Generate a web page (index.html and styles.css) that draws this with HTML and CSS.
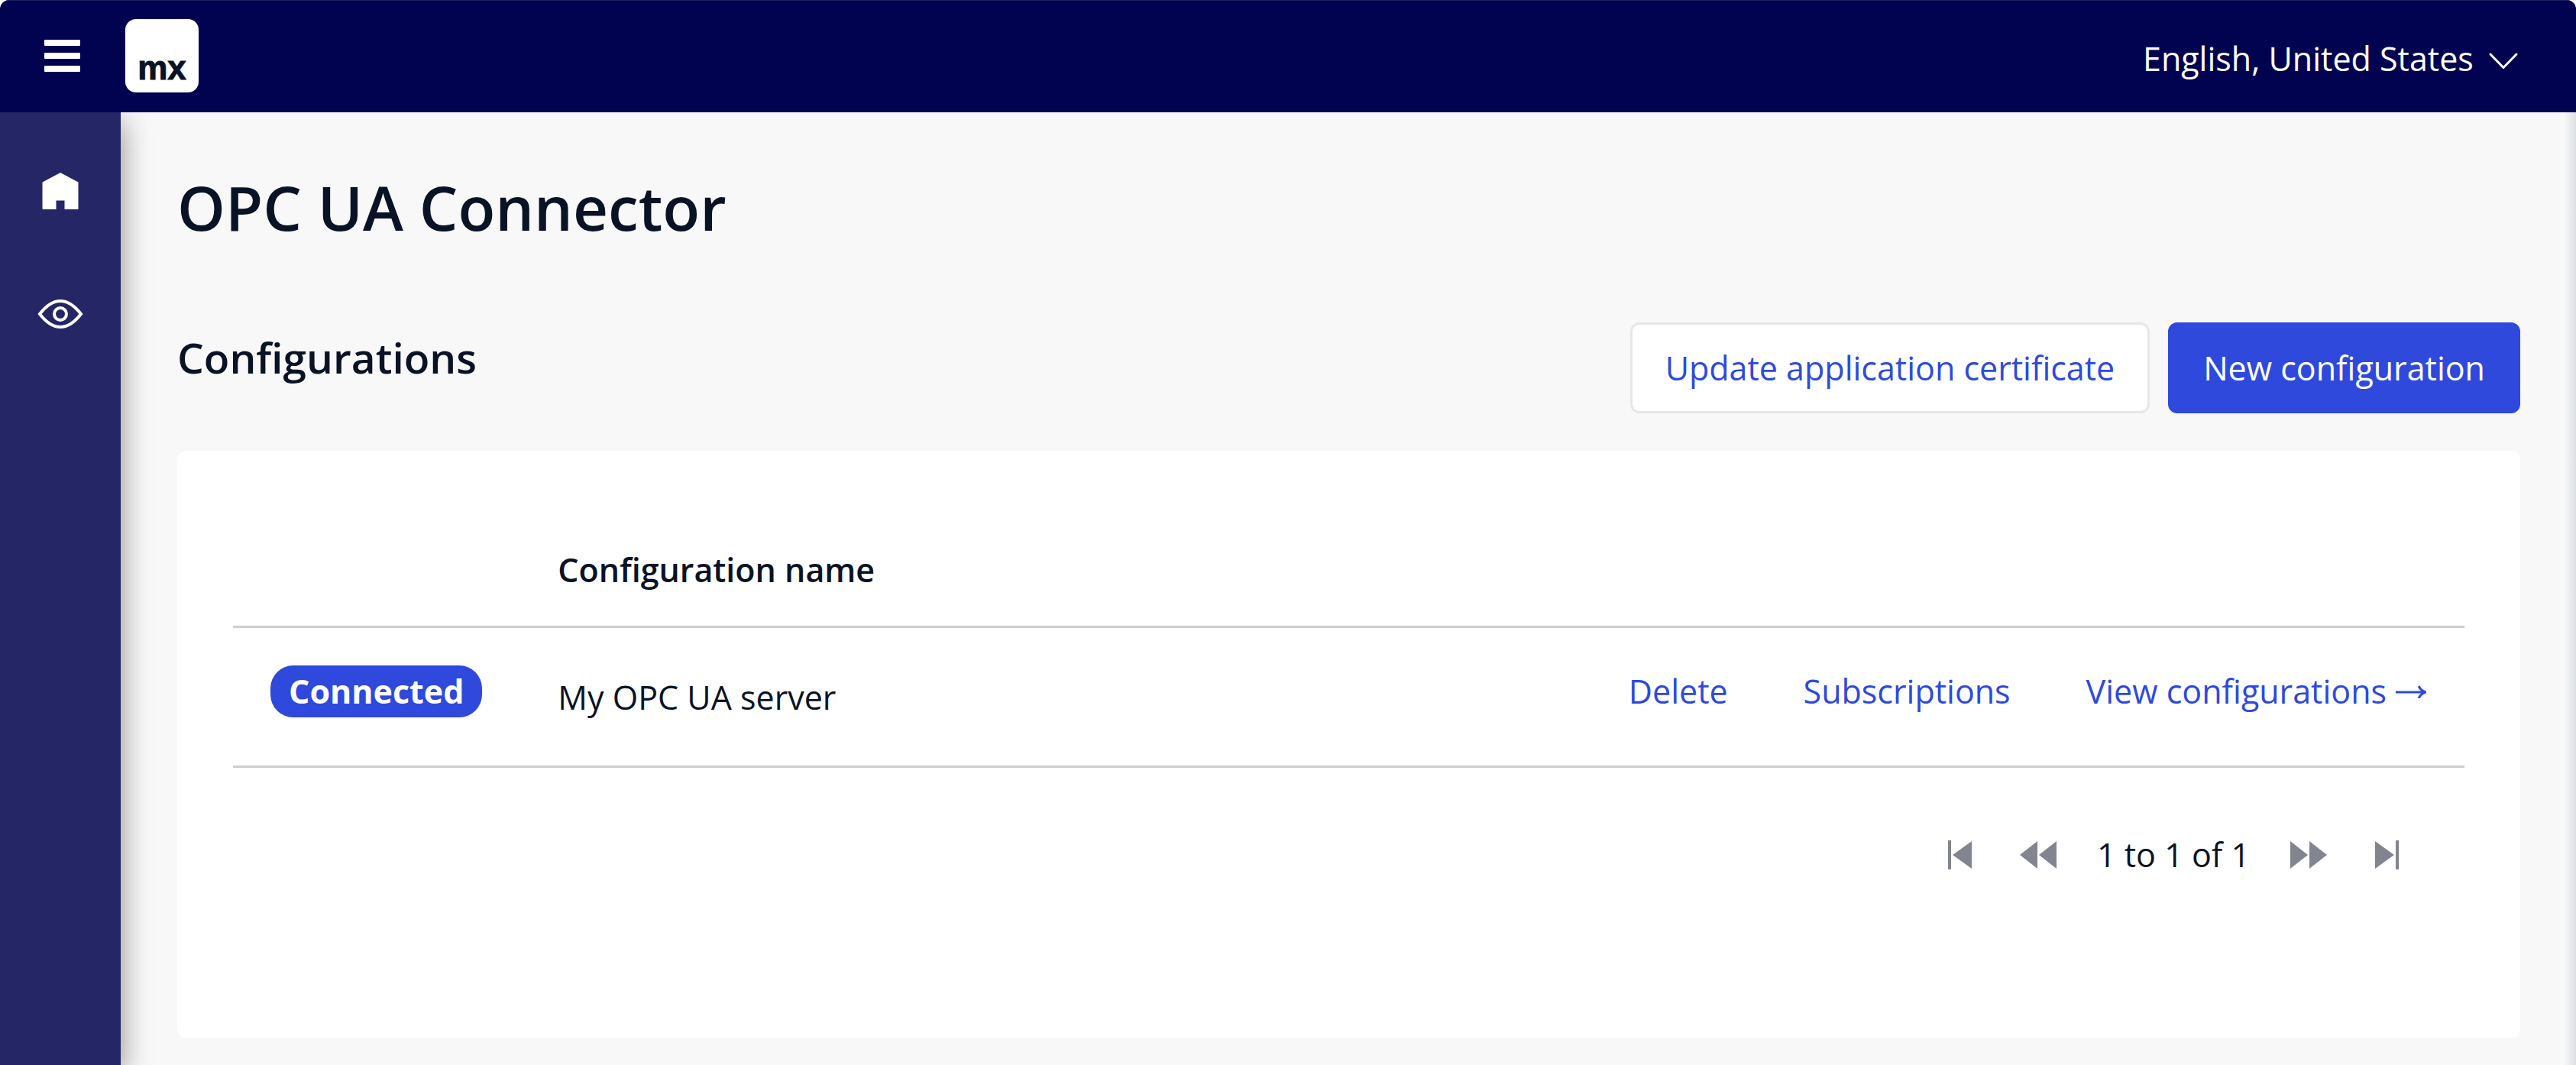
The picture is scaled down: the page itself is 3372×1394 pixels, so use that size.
FILE: index.html
```html
<!DOCTYPE html>
<html lang="en-US">
<head>
<meta charset="utf-8">
<meta name="viewport" content="width=device-width, initial-scale=1">
<title>OPC UA Connector</title>
<link rel="stylesheet" href="styles.css">
</head>
<body>
<div class="app">
  <header class="topbar">
    <button class="menu-toggle" type="button" aria-label="Toggle menu">
      <svg width="48" height="42" viewBox="0 0 48 42" fill="currentColor" aria-hidden="true">
        <rect x="0" width="47" height="8" rx="1"/>
        <rect x="0" y="17" width="47" height="8" rx="1"/>
        <rect x="0" y="34" width="47" height="8" rx="1"/>
      </svg>
    </button>
    <a class="logo" href="#">mx</a>
    <div class="language">
      <select class="language-select" aria-label="Language">
        <option>English, United States</option>
      </select>
      <svg class="language-chevron" width="38" height="22" viewBox="0 0 38 22" fill="none" stroke="currentColor" stroke-width="3" stroke-linecap="round" stroke-linejoin="round" aria-hidden="true">
        <path d="M2 2l17 17.500L36 2"/>
      </svg>
    </div>
  </header>
  <div class="body">
    <nav class="sidebar" aria-label="Main">
      <a class="nav-link" href="#" aria-label="Home">
        <svg width="60" height="48" viewBox="0 0 60 48" fill="currentColor" aria-hidden="true">
          <path d="M30 0L53.500 12.500V47a1 1 0 0 1-1 1H35.500V36.500H24.500V48H7.500a1 1 0 0 1-1-1V12.500z"/>
        </svg>
      </a>
      <a class="nav-link" href="#" aria-label="Monitor">
        <svg width="60" height="40" viewBox="0 0 60 40" fill="none" stroke="currentColor" stroke-width="4" aria-hidden="true">
          <path d="M3 20C10 11 19 3 30 3s20 8 27 17c-7 9-16 17-27 17S10 29 3 20z"/>
          <circle cx="30" cy="20" r="8"/>
        </svg>
      </a>
    </nav>
    <main class="content">
      <h1 class="title">OPC UA Connector</h1>
      <div class="section-head">
        <h2 class="subtitle">Configurations</h2>
        <div class="actions">
          <button class="btn" type="button">Update application certificate</button>
          <button class="btn btn-primary" type="button">New configuration</button>
        </div>
      </div>
      <section class="card">
        <table class="grid">
          <thead>
            <tr><th></th><th class="name" scope="col">Configuration name</th><th></th><th></th><th></th></tr>
          </thead>
          <tbody>
            <tr>
              <td><span class="badge">Connected</span></td>
              <td class="name">My OPC UA server</td>
              <td><a href="#">Delete</a></td>
              <td><a href="#">Subscriptions</a></td>
              <td><a class="arrow-link" href="#">View configurations
                <svg width="40" height="18" viewBox="0 0 40 18" fill="none" stroke="currentColor" stroke-width="3" aria-hidden="true">
                  <path d="M0 10h39"/><path d="M30 2q3 6 9 8q-6 2-9 8"/>
                </svg></a></td>
            </tr>
          </tbody>
        </table>
        <div class="pager">
          <button class="page-btn" type="button" aria-label="First page">
            <svg width="32" height="40" viewBox="0 0 32 40" fill="currentColor" aria-hidden="true"><path d="M0 1h4v38H0zM31 2v36L6 20z"/></svg>
          </button>
          <button class="page-btn" type="button" aria-label="Previous page">
            <svg width="48" height="40" viewBox="0 0 48 40" fill="currentColor" aria-hidden="true"><path d="M23 2v36L0 20zM48 2v36L25 20z"/></svg>
          </button>
          <span class="page-status">1 to 1 of 1</span>
          <button class="page-btn" type="button" aria-label="Next page">
            <svg width="48" height="40" viewBox="0 0 48 40" fill="currentColor" aria-hidden="true"><path d="M0 2v36l23-18zM25 2v36l23-18z"/></svg>
          </button>
          <button class="page-btn" type="button" aria-label="Last page">
            <svg width="32" height="40" viewBox="0 0 32 40" fill="currentColor" aria-hidden="true"><path d="M28 1h4v38h-4zM1 2v36l25-18z"/></svg>
          </button>
        </div>
      </section>
    </main>
  </div>
</div>
</body>
</html>
```
FILE: styles.css
```css
* {
  box-sizing: border-box;
}

body {
  margin: 0;
  background: #fff;
  color: #0a1325;
  font-family: "Open Sans", sans-serif;
  font-size: 43px;
  line-height: 68px;
}

button,
select {
  margin: 0;
  padding: 0;
  border: 0;
  background: none;
  color: inherit;
  font: inherit;
}

svg {
  display: block;
}

a {
  color: #2e49dc;
  text-decoration: none;
}

.app {
  position: relative;
  display: flex;
  flex-direction: column;
  min-height: 100vh;
  border-radius: 12px 12px 0 0;
  overflow: hidden;
}

/* soft shade along the right edge of the window */
.app::after {
  content: "";
  position: absolute;
  inset: 0 0 0 auto;
  width: 16px;
  background: linear-gradient(to right, rgba(40, 60, 90, 0), rgba(40, 60, 90, 0.13));
  pointer-events: none;
}

.topbar {
  position: relative;
  z-index: 2;
  display: flex;
  align-items: center;
  height: 147px;
  padding: 0 76px 2px 58px;
  border-top: 1px solid #1d1f62;
  background: #020350;
  color: #fff;
}

.logo {
  display: flex;
  justify-content: center;
  align-items: flex-end;
  width: 96px;
  height: 96px;
  margin-left: 58px;
  padding-bottom: 8px;
  border-radius: 14px;
  background: #fff;
  color: #0a1325;
  font-family: "Liberation Sans", sans-serif;
  font-size: 44px;
  font-weight: 700;
  line-height: 48px;
  -webkit-text-stroke: 1px #0a1325;
}

.language {
  display: flex;
  align-items: center;
  gap: 20px;
  margin-left: auto;
  padding-top: 8px;
}

.language-select {
  appearance: none;
  height: 68px;
}

.language-chevron {
  margin-top: 6px;
}

.body {
  flex: 1;
  display: flex;
}

.sidebar {
  position: relative;
  z-index: 1;
  flex: none;
  display: flex;
  flex-direction: column;
  width: 158px;
  padding-top: 22px;
  background: #252665;
  box-shadow: 0 12px 36px rgba(0, 0, 0, 0.45);
}

.nav-link {
  display: grid;
  place-items: center;
  height: 161px;
  color: #fff;
}

.content {
  flex: 1;
  padding: 70px 73px 35px 74px;
  background: #f8f8f8;
}

.title,
.subtitle {
  margin: 0;
  font-weight: 600;
}

.title {
  font-size: 80px;
  line-height: 108px;
}

.section-head {
  display: flex;
  justify-content: space-between;
  margin-top: 97px;
}

.subtitle {
  font-size: 55px;
  line-height: 92px;
}

.actions {
  display: flex;
  gap: 24px;
}

.btn {
  height: 119px;
  padding: 0 43px;
  border: 3px solid #e6e7e8;
  border-radius: 12px;
  background: #fff;
  color: #2e49dc;
}

.btn-primary {
  border-color: #2e49dc;
  background: #2e49dc;
  color: #fff;
}

.card {
  margin-top: 49px;
  min-height: 769px;
  padding: 73px;
  border-radius: 12px;
  background: #fff;
}

.grid {
  width: 100%;
  border-collapse: separate;
  border-spacing: 0;
}

.grid th,
.grid td {
  padding: 49px 50px 63px 49px;
  border-bottom: 3px solid #cecfd3;
  text-align: left;
  vertical-align: top;
  white-space: nowrap;
}

.grid th {
  padding: 49px 49px 39px;
  font-weight: 600;
}

.grid .name {
  width: 100%;
}

.grid td.name {
  padding: 57px 49px 55px;
}

.badge {
  display: block;
  padding: 0 24px;
  border-radius: 30px;
  background: #2e49dc;
  color: #fff;
  font-weight: 700;
}

.arrow-link {
  display: flex;
  align-items: center;
  gap: 12px;
}

.pager {
  display: flex;
  justify-content: flex-end;
  align-items: center;
  margin-top: 80px;
  padding-right: 86px;
}

.page-btn {
  color: #82858f;
}

.page-btn + .page-btn {
  margin-left: 62px;
}

.page-status {
  margin: 0 53px;
}
```
